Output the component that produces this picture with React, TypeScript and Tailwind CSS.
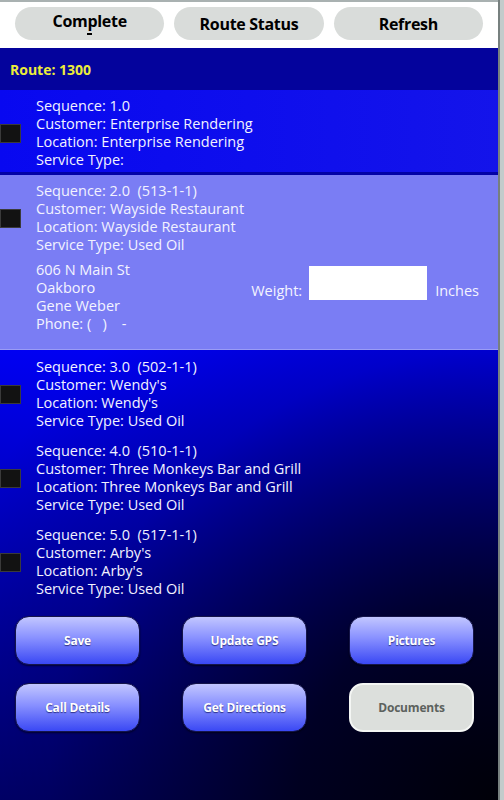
import React from "react";

type Stop = {
  seq: string;
  customer: string;
  location: string;
  service: string;
};

const STOPS: Stop[] = [
  { seq: "3.0  (502-1-1)", customer: "Wendy's", location: "Wendy's", service: "Used Oil" },
  {
    seq: "4.0  (510-1-1)",
    customer: "Three Monkeys Bar and Grill",
    location: "Three Monkeys Bar and Grill",
    service: "Used Oil",
  },
  { seq: "5.0  (517-1-1)", customer: "Arby's", location: "Arby's", service: "Used Oil" },
];

function Box() {
  return <div className="h-[19px] w-[21px] shrink-0 border border-[#3a3a3a] bg-[#121212]" />;
}

function StopLines({ stop }: { stop: Stop }) {
  return (
    <div className="flex flex-col whitespace-pre text-[14.5px] leading-[18px] text-[#f2f2ff]">
      <span>Sequence: {stop.seq}</span>
      <span>Customer: {stop.customer}</span>
      <span>Location: {stop.location}</span>
      <span>Service Type: {stop.service ? stop.service : ""}</span>
    </div>
  );
}

function StopRow({ stop }: { stop: Stop }) {
  return (
    <div className="flex items-center gap-[15px]">
      <Box />
      <StopLines stop={stop} />
    </div>
  );
}

function BlueButton({ label }: { label: string }) {
  return (
    <button
      type="button"
      className="h-[49px] rounded-[14px] border border-[#15154a] bg-[linear-gradient(to_bottom,#c2c6ff_0%,#8890ff_45%,#3a48f4_100%)] text-[12px] font-bold tracking-[-0.2px] text-white shadow-[0_1px_2px_rgba(0,0,0,0.6)] [text-shadow:0_1px_1px_rgba(0,0,60,0.6)]"
    >
      {label}
    </button>
  );
}

export default function App() {
  return (
    <div className="flex h-[800px] w-[504px] overflow-hidden font-['Open_Sans','Liberation_Sans',sans-serif]">
      <div className="flex min-w-0 flex-1 flex-col">
        {/* top action bar */}
        <div className="grid h-[48px] shrink-0 grid-cols-3 gap-[10px] border-t-2 border-[#a9b1b1] bg-white px-[15px] pt-[5px]">
          <button
            type="button"
            className="flex h-[33px] flex-col items-center justify-center rounded-full bg-[#d9dcda] text-[16px] font-bold leading-[18px] tracking-[-0.3px] text-black"
          >
            <span>Complete</span>
            <span className="mt-[3px] h-[2px] w-[5px] bg-black" />
          </button>
          <button
            type="button"
            className="h-[33px] rounded-full bg-[#d9dcda] text-[16px] font-bold tracking-[-0.3px] text-black"
          >
            Route Status
          </button>
          <button
            type="button"
            className="h-[33px] rounded-full bg-[#d9dcda] text-[16px] font-bold tracking-[-0.3px] text-black"
          >
            Refresh
          </button>
        </div>

        {/* route header */}
        <div className="flex h-[42px] shrink-0 items-center bg-[#04039c] px-[10px] text-[14px] font-bold text-[#ecec3a]">
          Route: 1300
        </div>

        {/* stop 1 */}
        <div className="flex shrink-0 items-center gap-[15px] bg-[linear-gradient(to_right,#0808f0,#1414ea)] pb-[3px] pt-[7px]">
          <Box />
          <StopLines
            stop={{ seq: "1.0", customer: "Enterprise Rendering", location: "Enterprise Rendering", service: "" }}
          />
        </div>
        <div className="h-[3px] shrink-0 bg-[#0202a6]" />

        {/* stop 2 (selected) */}
        <div className="flex shrink-0 flex-col bg-[#7a7df4] pb-[16px] pt-[7px]">
          <div className="flex items-center gap-[15px]">
            <Box />
            <StopLines
              stop={{
                seq: "2.0  (513-1-1)",
                customer: "Wayside Restaurant",
                location: "Wayside Restaurant",
                service: "Used Oil",
              }}
            />
          </div>
          <div className="mt-[7px] flex items-start pl-[36px] pr-[19px]">
            <div className="flex flex-col whitespace-pre text-[14.5px] leading-[18px] text-[#f4f4ff]">
              <span>606 N Main St</span>
              <span>Oakboro</span>
              <span>Gene Weber</span>
              <span>Phone: (   )    -</span>
            </div>
            <div className="ml-auto mt-[5px] flex items-end gap-[7px] text-[14.5px] leading-[18px] text-[#f4f4ff]">
              <span>Weight:</span>
              <div className="h-[34px] w-[118px] bg-white" />
              <span className="ml-[1px]">Inches</span>
            </div>
          </div>
        </div>

        {/* remaining stops + actions */}
        <div className="flex flex-1 flex-col border-t border-[#9a9cf6] bg-[radial-gradient(circle_at_100%_100%,rgba(0,0,0,0.93)_0px,rgba(0,0,0,0.72)_200px,rgba(0,0,0,0.15)_450px,transparent_600px),linear-gradient(to_bottom,#0000f2,#0000a8_55%,#000070)] pt-[8px]">
          <div className="flex flex-col gap-[12px]">
            {STOPS.map((s) => (
              <StopRow key={s.seq} stop={s} />
            ))}
          </div>

          <div className="mt-[18px] grid grid-cols-3 gap-x-[42px] gap-y-[18px] pl-[15px] pr-[24px]">
            <BlueButton label="Save" />
            <BlueButton label="Update GPS" />
            <BlueButton label="Pictures" />
            <BlueButton label="Call Details" />
            <BlueButton label="Get Directions" />
            <button
              type="button"
              className="h-[49px] rounded-[14px] border-2 border-[#f4f6f4] bg-[#dcdfdc] text-[12px] font-bold tracking-[-0.2px] text-[#5c625e]"
            >
              Documents
            </button>
          </div>
        </div>
      </div>

      {/* right edge */}
      <div className="w-[6px] shrink-0 border-l-2 border-[#77807f] bg-[#c3cbcb]" />
    </div>
  );
}
